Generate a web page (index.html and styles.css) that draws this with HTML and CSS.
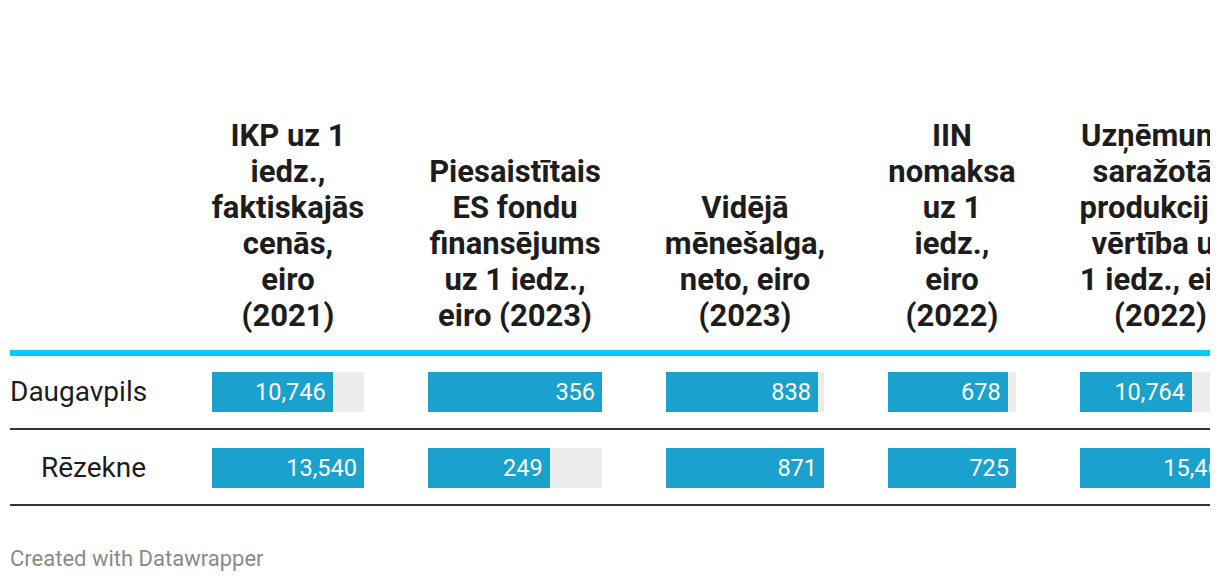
FILE: index.html
```html
<!DOCTYPE html>
<html lang="lv">
<head>
<meta charset="utf-8">
<title>Datawrapper table</title>
<link rel="stylesheet" href="styles.css">
</head>
<body>
<div class="chart">
  <div class="viewport">
    <div class="table">
      <div class="row head">
        <div class="hcell label-col"></div>
        <div class="hcell">IKP uz 1<br>iedz.,<br>faktiskajās<br>cenās,<br>eiro<br>(2021)</div>
        <div class="hcell">Piesaistītais<br>ES fondu<br>finansējums<br>uz 1 iedz.,<br>eiro (2023)</div>
        <div class="hcell">Vidējā<br>mēnešalga,<br>neto, eiro<br>(2023)</div>
        <div class="hcell">IIN<br>nomaksa<br>uz 1<br>iedz.,<br>eiro<br>(2022)</div>
        <div class="hcell">Uzņēmumu<br>saražotās<br>produkcijas<br>vērtība uz<br>1 iedz., eiro<br>(2022)</div>
      </div>
      <div class="row body first">
        <div class="cell label-col">Daugavpils</div>
        <div class="cell"><div class="bar"><div class="fill" style="width:79.4%">10,746</div></div></div>
        <div class="cell"><div class="bar"><div class="fill" style="width:100%">356</div></div></div>
        <div class="cell"><div class="bar"><div class="fill" style="width:96.2%">838</div></div></div>
        <div class="cell"><div class="bar"><div class="fill" style="width:93.5%">678</div></div></div>
        <div class="cell"><div class="bar"><div class="fill" style="width:69.6%">10,764</div></div></div>
      </div>
      <div class="row body second">
        <div class="cell label-col">Rēzekne</div>
        <div class="cell"><div class="bar"><div class="fill" style="width:100%">13,540</div></div></div>
        <div class="cell"><div class="bar"><div class="fill" style="width:69.9%">249</div></div></div>
        <div class="cell"><div class="bar"><div class="fill" style="width:100%">871</div></div></div>
        <div class="cell"><div class="bar"><div class="fill" style="width:100%">725</div></div></div>
        <div class="cell"><div class="bar"><div class="fill" style="width:100%">15,460</div></div></div>
      </div>
    </div>
  </div>
  <div class="footer">Created with Datawrapper</div>
</div>
</body>
</html>
```
FILE: styles.css
```css
* { box-sizing: border-box; }
html, body {
  margin: 0;
  padding: 0;
  background: #ffffff;
}
body {
  font-family: Roboto, "Liberation Sans", sans-serif;
  color: #1d1d1d;
}
.chart {
  padding: 118px 10px 0 10px;
}
.viewport {
  width: 1200px;
  overflow: hidden;
}
.table {
  width: 1263px;
}
.row {
  display: grid;
  grid-template-columns: 170px 216px 238px 222px 192px 225px;
}
.head {
  align-items: end;
  border-bottom: 6px solid #00ccff;
}
.hcell {
  padding: 0 10px 16px;
  text-align: center;
  font-weight: 700;
  font-size: 31px;
  line-height: 36px;
  white-space: nowrap;
  color: #1d1d1d;
}
.body {
  align-items: center;
  border-bottom: 2px solid #333333;
}
.first { padding: 16px 0 16px; }
.second { padding: 18px 0 16px; }
.cell {
  padding: 0 32px;
}
.cell.label-col {
  padding: 0 34px 0 0;
  text-align: right;
  font-size: 28px;
  line-height: 40px;
  color: #1d1d1d;
}
.bar {
  height: 40px;
  background: #ececec;
  display: flex;
}
.fill {
  height: 40px;
  background: #1ba1ce;
  color: #ffffff;
  font-size: 23.5px;
  line-height: 40px;
  text-align: right;
  padding-right: 7px;
  white-space: nowrap;
}
.footer {
  margin-top: 40px;
  font-size: 22px;
  line-height: 26px;
  color: #8a8a8a;
}
```
